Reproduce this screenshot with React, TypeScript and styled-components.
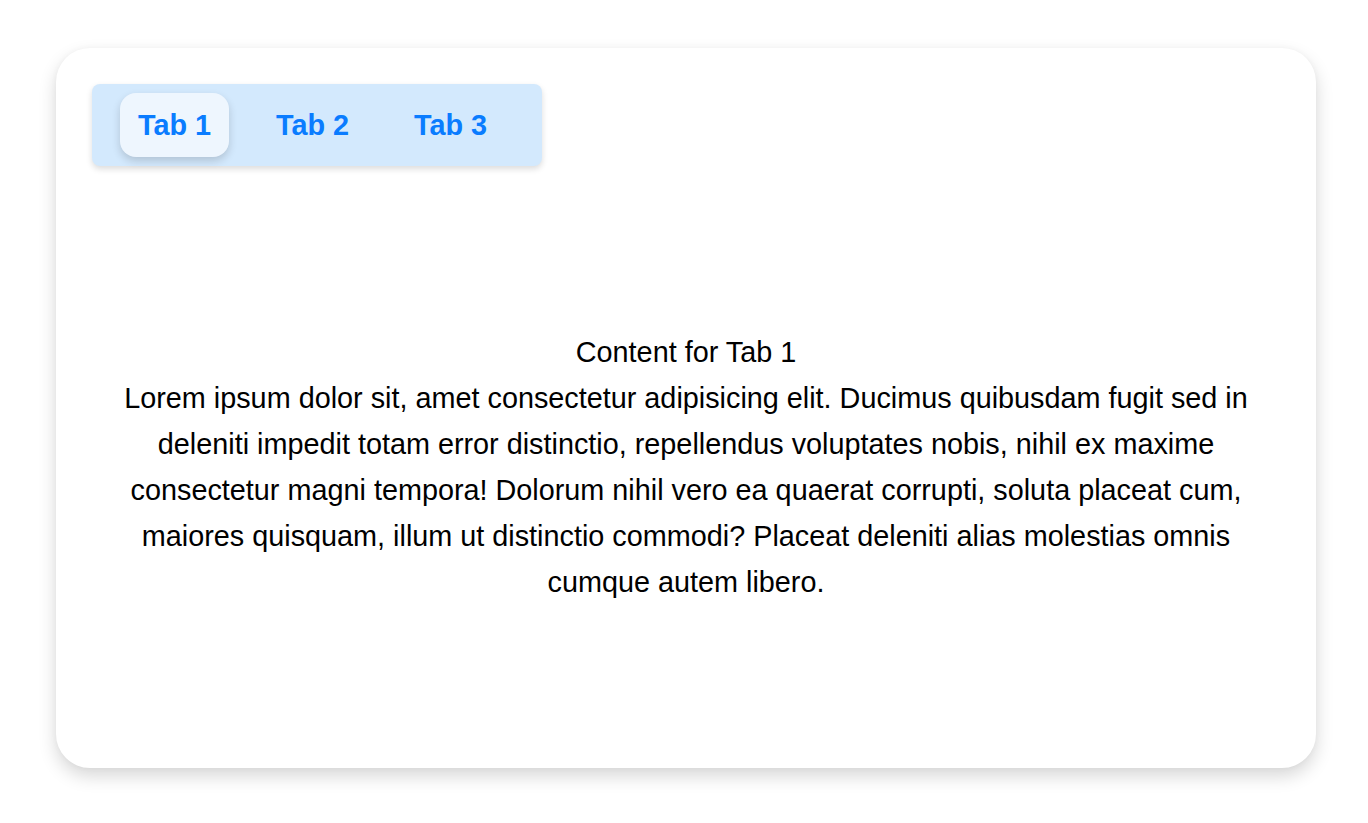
import React, { useState } from "react";
import styled, { createGlobalStyle } from "styled-components";

const GlobalStyle = createGlobalStyle`
  html, body { margin: 0; padding: 0; background: #ffffff; }
  body { font-family: "Liberation Sans", Arial, sans-serif; }
  * { box-sizing: border-box; }
`;

const Page = styled.div`
  padding: 48px 52px 55px 56px;
  display: flex;
`;

const Card = styled.div`
  width: 1260px;
  height: 720px;
  background: #ffffff;
  border-radius: 34px;
  box-shadow: 0 8px 18px rgba(0, 0, 0, 0.16), 0 0 6px rgba(0, 0, 0, 0.03);
  padding: 36px;
  display: flex;
  flex-direction: column;
`;

const TabBar = styled.div`
  width: 450px;
  height: 82px;
  background: #d3e9fd;
  border-radius: 8px;
  padding: 9px 28px;
  display: flex;
  gap: 29px;
  box-shadow: 0 3px 6px rgba(0, 0, 0, 0.14);
`;

const Tab = styled.button<{ $active: boolean }>`
  height: 64px;
  width: 109px;
  padding: 0;
  border: none;
  border-radius: 16px;
  font-family: "Liberation Sans", Arial, sans-serif;
  font-weight: 700;
  font-size: 28.8px;
  color: #0a7cff;
  cursor: pointer;
  background: ${(p) => (p.$active ? "#eef6fe" : "transparent")};
  box-shadow: ${(p) => (p.$active ? "0 4px 8px rgba(0, 0, 0, 0.16)" : "none")};
`;

const Content = styled.div`
  flex: 1;
  margin-top: 36px;
  display: flex;
  align-items: center;
  justify-content: center;
  text-align: center;
  font-size: 28.8px;
  line-height: 1.6;
  color: #000000;
`;

const Text = styled.div``;

const lorem =
  "Lorem ipsum dolor sit, amet consectetur adipisicing elit. Ducimus quibusdam fugit sed in deleniti impedit totam error distinctio, repellendus voluptates nobis, nihil ex maxime consectetur magni tempora! Dolorum nihil vero ea quaerat corrupti, soluta placeat cum, maiores quisquam, illum ut distinctio commodi? Placeat deleniti alias molestias omnis cumque autem libero.";

export default function App() {
  const [active, setActive] = useState(1);
  return (
    <>
      <GlobalStyle />
      <Page>
        <Card>
          <TabBar>
            {[1, 2, 3].map((n) => (
              <Tab key={n} $active={active === n} onClick={() => setActive(n)}>
                Tab {n}
              </Tab>
            ))}
          </TabBar>
          <Content>
            <Text>
              Content for Tab {active}
              <br />
              {lorem}
            </Text>
          </Content>
        </Card>
      </Page>
    </>
  );
}
